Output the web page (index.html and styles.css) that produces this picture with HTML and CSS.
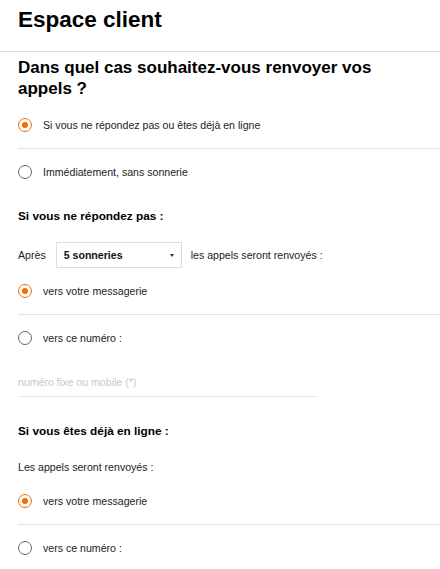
FILE: index.html
```html
<!DOCTYPE html>
<html lang="fr">
<head>
<meta charset="utf-8">
<title>Espace client</title>
<link rel="stylesheet" href="styles.css">
</head>
<body>
<header class="top">
  <h1 class="title">Espace client</h1>
</header>
<main class="content">
  <h2 class="question">Dans quel cas souhaitez-vous renvoyer vos appels ?</h2>
  <div class="group">
    <label class="row"><span class="radio checked"></span><span class="lbl">Si vous ne répondez pas ou êtes déjà en ligne</span></label>
    <label class="row"><span class="radio"></span><span class="lbl">Immédiatement, sans sonnerie</span></label>
  </div>

  <h3 class="sub sub-first">Si vous ne répondez pas :</h3>
  <div class="after">
    <span class="txt">Après</span>
    <div class="select"><span class="sel-val">5 sonneries</span><span class="caret"></span></div>
    <span class="txt">les appels seront renvoyés :</span>
  </div>
  <div class="group">
    <label class="row"><span class="radio checked"></span><span class="lbl">vers votre messagerie</span></label>
    <label class="row"><span class="radio"></span><span class="lbl">vers ce numéro :</span></label>
  </div>
  <input class="phone" type="text" placeholder="numéro fixe ou mobile (*)">

  <h3 class="sub sub-second">Si vous êtes déjà en ligne :</h3>
  <p class="txt note">Les appels seront renvoyés :</p>
  <div class="group">
    <label class="row"><span class="radio checked"></span><span class="lbl">vers votre messagerie</span></label>
    <label class="row"><span class="radio"></span><span class="lbl">vers ce numéro :</span></label>
  </div>
</main>
</body>
</html>
```
FILE: styles.css
```css
* { box-sizing: border-box; }
html, body {
  margin: 0;
  padding: 0;
  background: #fff;
  color: #111;
  font-family: "Liberation Sans", Arial, Helvetica, sans-serif;
}
.top {
  border-bottom: 1px solid #dcdcdc;
  padding: 7px 18px 18px;
}
.title {
  margin: 0;
  font-size: 22.5px;
  line-height: 26px;
  font-weight: 700;
  color: #000;
}
.content {
  padding-left: 18px;
}
.question {
  margin: 5px 0 3px;
  padding-right: 40px;
  font-size: 17px;
  line-height: 21px;
  font-weight: 700;
  color: #000;
}
.group {
  display: flex;
  flex-direction: column;
}
.row {
  display: flex;
  align-items: center;
  height: 46px;
  gap: 11px;
}
.row + .row {
  border-top: 1px solid #e2e2e2;
}
.radio {
  width: 14px;
  height: 14px;
  border-radius: 50%;
  border: 1.7px solid #666;
  display: flex;
  align-items: center;
  justify-content: center;
  flex: none;
}
.radio.checked {
  border-color: #f16e00;
}
.radio.checked::after {
  content: "";
  width: 6px;
  height: 6px;
  border-radius: 50%;
  background: #f16e00;
}
.lbl, .txt {
  font-size: 10.6px;
  line-height: 14px;
  color: #222;
}
.sub {
  margin: 0;
  font-size: 11.8px;
  line-height: 14px;
  font-weight: 700;
  color: #000;
}
.sub-first { margin-top: 15px; }
.sub-second { margin-top: 27px; }
.after {
  display: flex;
  align-items: center;
  margin-top: 19px;
}
.select {
  width: 126px;
  height: 26px;
  margin: 0 9px 0 10px;
  border: 1px solid #dcdcdc;
  display: flex;
  align-items: center;
  justify-content: space-between;
  padding: 0 7px 0 7px;
}
.sel-val {
  font-size: 10.6px;
  font-weight: 700;
  color: #111;
}
.caret {
  width: 0;
  height: 0;
  border-left: 2.5px solid transparent;
  border-right: 2.5px solid transparent;
  border-top: 3px solid #333;
}
.phone {
  display: block;
  width: 299px;
  height: 30px;
  margin: 7px 0 0;
  padding: 0;
  border: none;
  border-bottom: 1px solid #e6e6e6;
  outline: none;
  font-family: inherit;
  font-size: 10.6px;
  color: #222;
  background: transparent;
}
.phone::placeholder {
  color: #c8c8c8;
}
.note {
  margin: 22px 0 4px;
}
```
